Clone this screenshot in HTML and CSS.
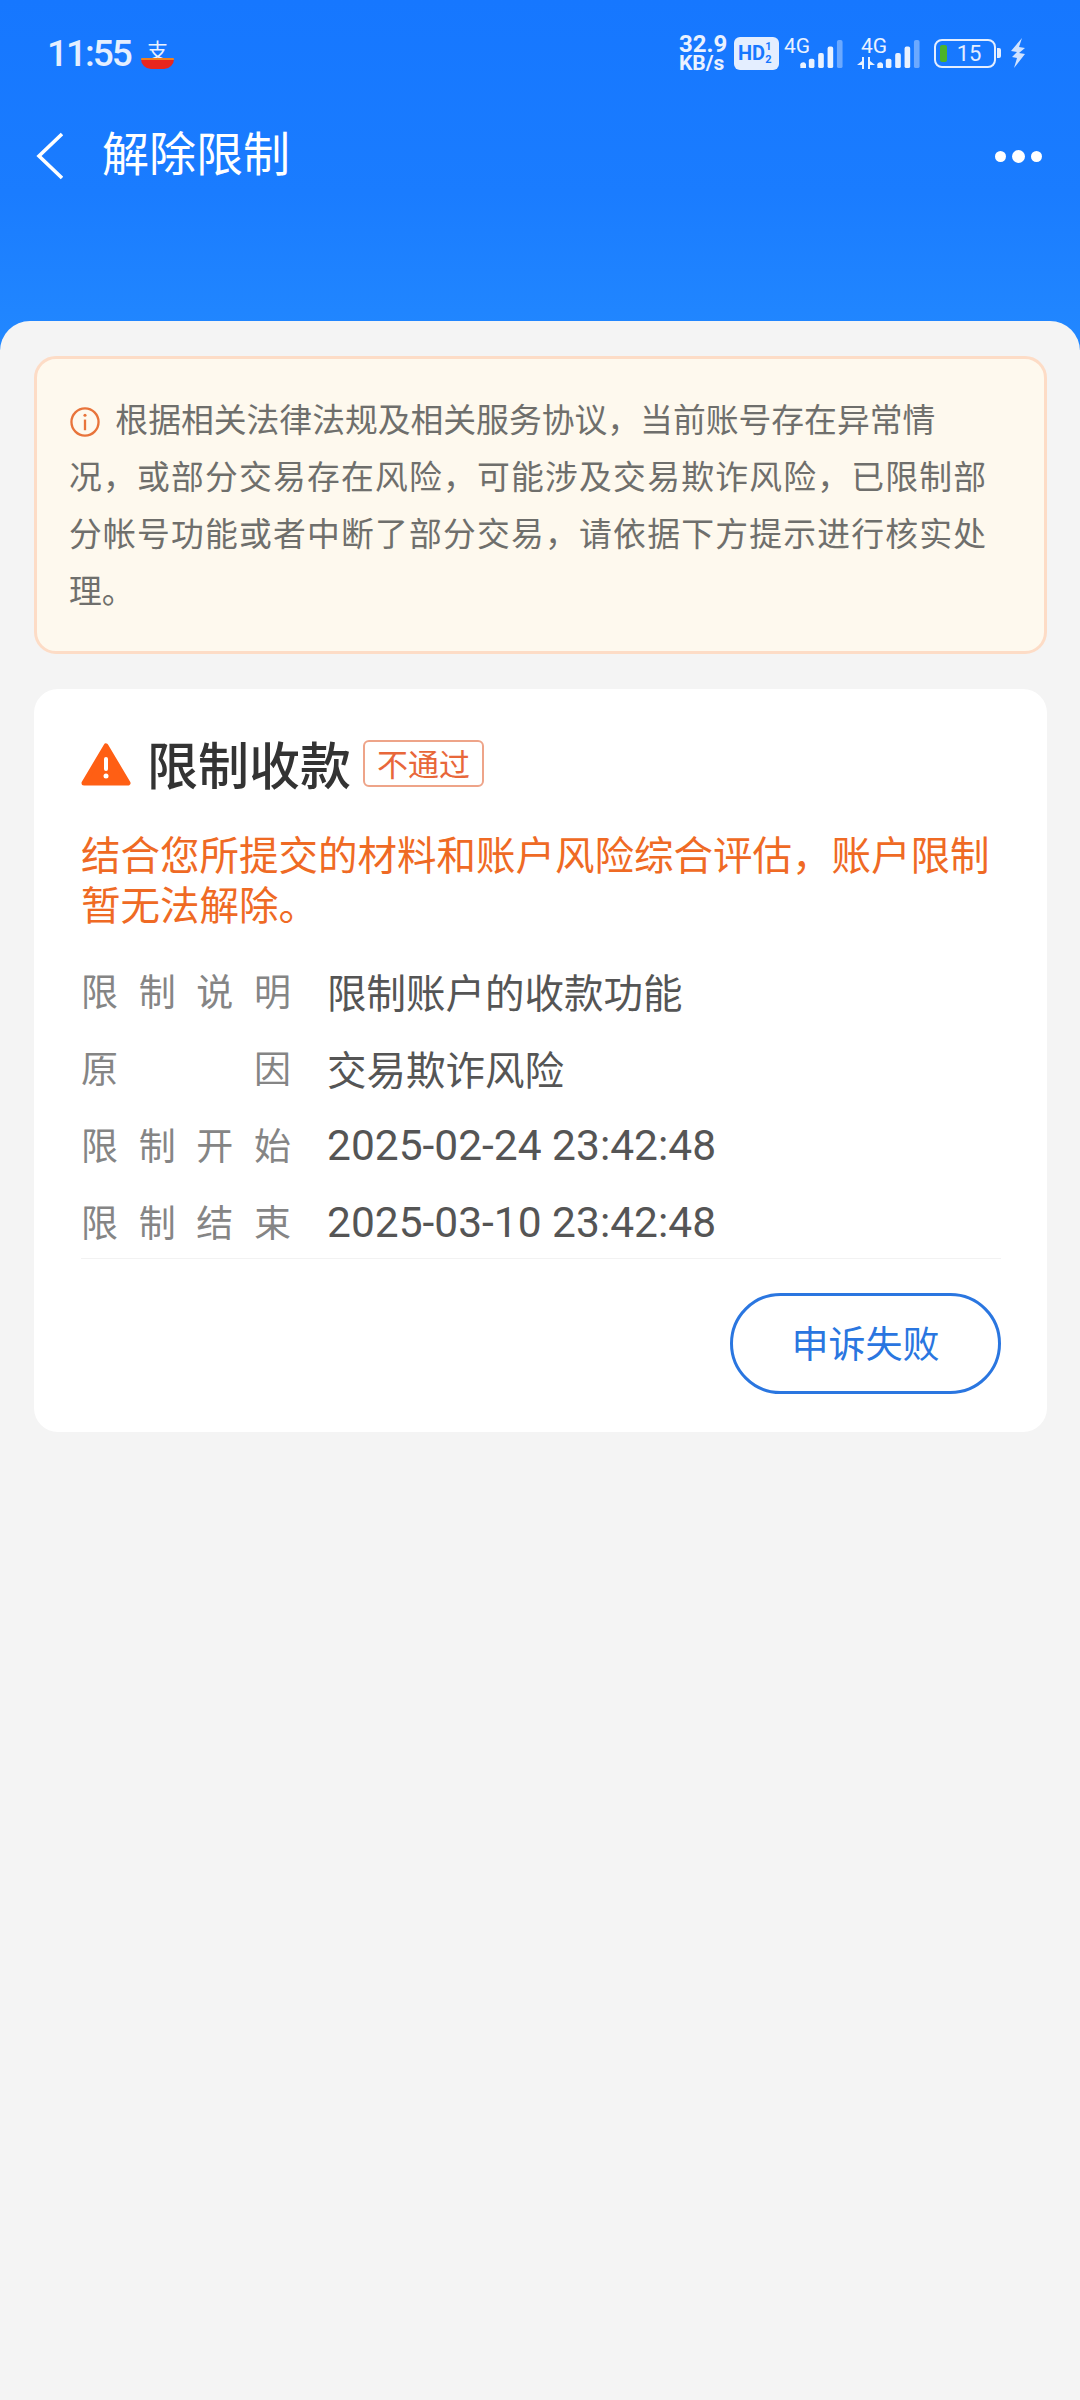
FILE: index.html
```html
<!DOCTYPE html>
<html lang="zh-CN">
<head>
    <meta charset="UTF-8">
    <meta name="viewport" content="width=device-width, initial-scale=1.0">
    <title>解除限制</title>
    <link rel="stylesheet" href="styles.css">
</head>
<body>
    <header class="top">
        <div class="status-bar">
            <div class="status-left">
                <span class="clock">11:55</span>
                <span class="app-badge">
                    <span class="app-char">支</span>
                    <span class="app-boat"></span>
                </span>
            </div>
            <div class="status-right">
                <div class="speed"><span>32.9</span><span>KB/s</span></div>
                <div class="hd">HD<span class="hd-sim"><i>1</i><i>2</i></span></div>
                <div class="signal first">
                    <span class="net">4G</span>
                    <svg width="46" height="30" viewBox="0 0 46 32">
                        <path d="M1 31v-2a3 3 0 0 1 6-2v4z" fill="#eaf2ff"/>
                        <rect x="10" y="21" width="6" height="10" rx="2" fill="#eaf2ff"/>
                        <rect x="20" y="15" width="6" height="16" rx="2" fill="#eaf2ff"/>
                        <rect x="30" y="8" width="6" height="23" rx="2" fill="#eaf2ff"/>
                        <rect x="40" y="1" width="6" height="30" rx="2" fill="#eaf2ff" opacity=".4"/>
                    </svg>
                </div>
                <div class="signal second">
                    <span class="net">4G</span>
                    <svg class="arrows" width="18" height="12" viewBox="0 0 18 12">
                        <path d="M7 0v12H5V8H0l5-4V0zM11 0v12h2V8h5l-5-4V0z" fill="#eaf2ff"/>
                    </svg>
                    <svg width="46" height="30" viewBox="0 0 46 32">
                        <path d="M1 31v-2a3 3 0 0 1 6-2v4z" fill="#eaf2ff"/>
                        <rect x="10" y="21" width="6" height="10" rx="2" fill="#eaf2ff"/>
                        <rect x="20" y="15" width="6" height="16" rx="2" fill="#eaf2ff"/>
                        <rect x="30" y="8" width="6" height="23" rx="2" fill="#eaf2ff"/>
                        <rect x="40" y="1" width="6" height="30" rx="2" fill="#eaf2ff" opacity=".4"/>
                    </svg>
                </div>
                <div class="battery">
                    <span class="battery-level"></span>
                    <span class="battery-num">15</span>
                </div>
                <span class="battery-nub"></span>
                <svg class="bolt" width="18" height="30" viewBox="0 0 18 30">
                    <path d="M12 0L1 13l6 1-5 5 5 1-3 10 11-14-6-1 6-5-6-1z" fill="#cfe2ff"/>
                </svg>
            </div>
        </div>
        <div class="nav">
            <svg class="back" width="30" height="50" viewBox="0 0 30 50">
                <path d="M29 3L6 25l23 22" fill="none" stroke="#fff" stroke-width="3.6"/>
            </svg>
            <h1>解除限制</h1>
            <div class="more"><i></i><i class="big"></i><i></i></div>
        </div>
    </header>

    <main class="sheet">
        <section class="notice">
            <svg class="info" width="30" height="30" viewBox="0 0 31 31">
                <circle cx="15.5" cy="15.5" r="14" fill="none" stroke="#e8743b" stroke-width="2.4"/>
                <path d="M15.5 13v11" stroke="#e8743b" stroke-width="2.4"/>
                <circle cx="15.5" cy="8.5" r="1.6" fill="#e8743b"/>
            </svg>
            根据相关法律法规及相关服务协议，当前账号存在异常情<br>况，或部分交易存在风险，可能涉及交易欺诈风险，已限制部分帐号功能或者中断了部分交易，请依据下方提示进行核实处理。
        </section>

        <section class="card">
            <div class="card-title">
                <svg width="50" height="44" viewBox="0 0 50 44">
                    <path d="M25 3L47 40H3z" fill="#ff5f14" stroke="#ff5f14" stroke-width="5" stroke-linejoin="round"/>
                    <rect x="23" y="14" width="4" height="14" rx="2" fill="#fff"/>
                    <circle cx="25" cy="33" r="2.5" fill="#fff"/>
                </svg>
                <h2>限制收款</h2>
                <span class="tag">不通过</span>
            </div>
            <p class="result">结合您所提交的材料和账户风险综合评估，账户限制暂无法解除。</p>
            <dl class="rows">
                <div class="row"><dt>限制说明</dt><dd>限制账户的收款功能</dd></div>
                <div class="row"><dt>原因</dt><dd>交易欺诈风险</dd></div>
                <div class="row"><dt>限制开始</dt><dd class="time">2025-02-24 23:42:48</dd></div>
                <div class="row"><dt>限制结束</dt><dd class="time">2025-03-10 23:42:48</dd></div>
            </dl>
            <div class="actions">
                <a class="btn">申诉失败</a>
            </div>
        </section>
    </main>
</body>
</html>
```

FILE: styles.css
```css
* {
    box-sizing: border-box;
}

body {
    margin: 0;
    width: 1080px;
    height: 2400px;
    overflow: hidden;
    font-family: "Noto Sans CJK SC", Roboto, sans-serif;
    background-color: #f4f4f4;
}

.top {
    height: 350px;
    background: linear-gradient(180deg, #1677ff 0%, #1a7cff 55%, #2288ff 100%);
    padding: 34px 52px 0 47px;
}

.status-bar {
    height: 38px;
    display: flex;
    justify-content: space-between;
    align-items: center;
}

.status-left {
    display: flex;
    align-items: center;
    gap: 10px;
}

.clock {
    font-family: Roboto, sans-serif;
    font-size: 37px;
    font-weight: 500;
    letter-spacing: -2px;
    color: #e4efff;
}

.app-badge {
    position: relative;
    width: 33px;
    height: 30px;
    margin-top: 2px;
}

.app-char {
    position: absolute;
    left: 6px;
    top: -2px;
    font-size: 21px;
    line-height: 24px;
    color: #eaf2ff;
}

.app-boat {
    position: absolute;
    left: 0;
    bottom: 0;
    width: 33px;
    height: 11px;
    background-color: #e8261e;
    border-top: 2px solid #f08020;
    border-radius: 1px 1px 10px 10px;
}

.status-right {
    display: flex;
    align-items: center;
}

.speed {
    display: flex;
    flex-direction: column;
    width: 55px;
    font-family: Roboto, sans-serif;
    font-size: 21px;
    font-weight: 700;
    line-height: 19px;
    color: #eaf2ff;
}

.speed span:first-child {
    font-size: 24px;
    line-height: 20px;
}

.hd {
    width: 45px;
    height: 33px;
    display: flex;
    align-items: center;
    padding-left: 4px;
    background-color: #e4eeff;
    border-radius: 6px;
    font-family: Roboto, sans-serif;
    font-size: 20px;
    font-weight: 700;
    color: #1677ff;
    margin-right: 5px;
}

.hd-sim {
    display: flex;
    flex-direction: column;
    font-size: 11px;
    line-height: 13px;
}

.hd-sim i {
    font-style: normal;
}

.signal {
    position: relative;
    width: 60px;
    height: 32px;
    display: flex;
    justify-content: flex-end;
    align-items: flex-end;
    margin-right: 13px;
}

.signal.second {
    width: 64px;
}

.net {
    position: absolute;
    left: 0;
    top: -1px;
    font-family: Roboto, sans-serif;
    font-size: 21px;
    line-height: 20px;
    color: #eaf2ff;
}

.signal.second .net {
    left: 4px;
}

.arrows {
    position: absolute;
    left: 0;
    bottom: 0;
}

.battery {
    position: relative;
    width: 62px;
    height: 29px;
    border: 2.5px solid #e4eeff;
    border-radius: 8px;
    display: flex;
    align-items: center;
    justify-content: center;
    padding-left: 8px;
}

.battery-level {
    position: absolute;
    left: 4px;
    top: 4px;
    bottom: 4px;
    width: 7px;
    border-radius: 2px;
    background-color: #4cb32b;
}

.battery-num {
    font-family: Roboto, sans-serif;
    font-size: 22px;
    color: #e4eeff;
}

.battery-nub {
    width: 4px;
    height: 10px;
    margin: 0 9px 0 1px;
    background-color: #e4eeff;
    border-radius: 0 2px 2px 0;
}

.nav {
    height: 56px;
    margin: 51px -14px 0 -14px;
    display: flex;
    align-items: center;
}

.back {
    margin: 10px 39px 0 0;
}

h1 {
    margin: 0;
    flex: 1;
    font-size: 47px;
    font-weight: 400;
    line-height: 56px;
    color: #fff;
}

.more {
    display: flex;
    align-items: center;
    gap: 6px;
    margin-top: 10px;
}

.more i {
    width: 11px;
    height: 11px;
    border-radius: 50%;
    background-color: #fff;
}

.more i.big {
    width: 13px;
    height: 13px;
}

.sheet {
    height: 2079px;
    margin-top: -29px;
    padding: 35px 33px 0 34px;
    background-color: #f4f4f4;
    border-radius: 30px 30px 0 0;
}

.notice {
    height: 298px;
    padding: 30px 58px 0 32px;
    background-color: #fef9ee;
    border: 3px solid #fddcc6;
    border-radius: 22px;
    font-size: 32.8px;
    line-height: 57px;
    text-align: justify;
    color: #6f6f6c;
}

.info {
    vertical-align: -5px;
    margin: 0 8px 0 1px;
}

.card {
    height: 743px;
    margin-top: 35px;
    padding: 45px 46px 0 47px;
    background-color: #fff;
    border-radius: 24px;
}

.card-title {
    display: flex;
    align-items: center;
    height: 58px;
}

.card-title svg {
    margin: 3px 16px 0 0;
}

h2 {
    margin: 0;
    font-size: 51px;
    font-weight: 500;
    line-height: 58px;
    color: #333;
}

.tag {
    margin-left: 12px;
    width: 121px;
    height: 47px;
    border: 2px solid #eea489;
    border-radius: 6px;
    font-size: 31px;
    line-height: 41px;
    text-align: center;
    color: #e8673a;
}

.result {
    margin: 36px 0 0;
    font-size: 39.5px;
    line-height: 50px;
    color: #ef6a24;
}

.rows {
    display: flex;
    flex-direction: column;
    gap: 19px;
    margin: 33px 0 0;
    padding-bottom: 8px;
    border-bottom: 1px solid #f2f2f2;
}

.row {
    display: flex;
    align-items: center;
    height: 58px;
}

dt {
    width: 210px;
    margin-right: 36px;
    font-size: 37px;
    color: #858585;
    text-align: justify;
    text-align-last: justify;
}

dd {
    margin: 0;
    font-size: 39.5px;
    color: #555;
}

dd.time {
    margin-top: 2px;
    font-family: Roboto, sans-serif;
    font-size: 42.5px;
}

.actions {
    display: flex;
    justify-content: flex-end;
    margin-top: 34px;
}

.btn {
    width: 271px;
    height: 101px;
    border: 3px solid #2a76e0;
    border-radius: 51px;
    font-size: 37px;
    line-height: 92px;
    text-align: center;
    color: #2a76e0;
}
```
